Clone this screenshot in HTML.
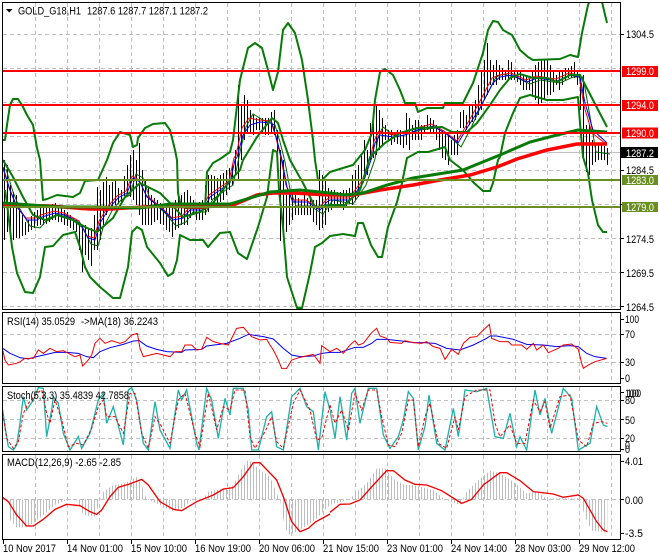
<!DOCTYPE html>
<html><head><meta charset="utf-8"><title>GOLD_G18,H1</title>
<style>
html,body{margin:0;padding:0;background:#fff;width:660px;height:560px;overflow:hidden}
svg{display:block}
text{font-family:"Liberation Sans",sans-serif;font-size:11px;fill:#000}
.n{fill:none}
</style></head><body>
<svg width="660" height="560" viewBox="0 0 660 560" xmlns="http://www.w3.org/2000/svg">
<defs>
<clipPath id="cm"><rect x="3" y="3" width="617" height="306"/></clipPath>
<clipPath id="cs"><rect x="0" y="231" width="1000" height="193"/></clipPath>
<pattern id="st" patternUnits="userSpaceOnUse" width="9" height="9"><rect x="3" y="0" width="3" height="9" fill="#bdbdbd"/></pattern>
</defs>
<rect width="660" height="560" fill="#fff"/>

<!-- grid -->
<g stroke="#c0c0c0" stroke-width="1" stroke-dasharray="4 3" fill="none" shape-rendering="crispEdges">
<path d="M35.5 3V309M67.5 3V309M99.5 3V309M131.5 3V309M163.5 3V309M195.5 3V309M227.5 3V309M259.5 3V309M291.5 3V309M323.5 3V309M355.5 3V309M387.5 3V309M419.5 3V309M451.5 3V309M483.5 3V309M515.5 3V309M547.5 3V309M579.5 3V309M611.5 3V309"/>
<path d="M3 34.5H620M3 68.5H620M3 102.5H620M3 136.5H620M3 170.5H620M3 204.5H620M3 238.5H620M3 272.5H620M3 306.5H620"/>
<path d="M35.5 313V383M67.5 313V383M99.5 313V383M131.5 313V383M163.5 313V383M195.5 313V383M227.5 313V383M259.5 313V383M291.5 313V383M323.5 313V383M355.5 313V383M387.5 313V383M419.5 313V383M451.5 313V383M483.5 313V383M515.5 313V383M547.5 313V383M579.5 313V383M611.5 313V383"/>
<path d="M3 334.5H620M3 362.5H620"/>
<path d="M35.5 387V451M67.5 387V451M99.5 387V451M131.5 387V451M163.5 387V451M195.5 387V451M227.5 387V451M259.5 387V451M291.5 387V451M323.5 387V451M355.5 387V451M387.5 387V451M419.5 387V451M451.5 387V451M483.5 387V451M515.5 387V451M547.5 387V451M579.5 387V451M611.5 387V451"/>
<path d="M3 400.5H620M3 419.5H620M3 438.5H620"/>
<path d="M35.5 455V539M67.5 455V539M99.5 455V539M131.5 455V539M163.5 455V539M195.5 455V539M227.5 455V539M259.5 455V539M291.5 455V539M323.5 455V539M355.5 455V539M387.5 455V539M419.5 455V539M451.5 455V539M483.5 455V539M515.5 455V539M547.5 455V539M579.5 455V539M611.5 455V539"/>
<path d="M3 499.5H620"/>
</g>
<path d="M3 152.5H620" stroke="#c0c0c0" stroke-width="1" shape-rendering="crispEdges"/>

<g clip-path="url(#cm)">
<!-- price bars -->
<path stroke="#000" stroke-width="1" fill="none" shape-rendering="crispEdges" d="M4.5 160V240M7.5 165V232M10.5 185V238M13.5 192V240M16.5 195V238M19.5 205V238M22.5 215V236M25.5 222V235M28.5 220V232M31.5 216V230M34.5 212V228M37.5 210V226M40.5 208V225M43.5 206V225M46.5 205V224M49.5 205V222M52.5 204V220M55.5 203V220M58.5 206V222M61.5 208V222M64.5 210V225M67.5 212V226M70.5 215V228M73.5 218V230M76.5 220V232M79.5 225V250M82.5 225V272M85.5 225V255M88.5 228V260M91.5 228V266M94.5 215V250M97.5 187V250M100.5 190V240M103.5 182V225M106.5 177V215M109.5 185V210M112.5 182V208M115.5 180V205M118.5 188V204M121.5 190V202M124.5 176V196M127.5 165V195M130.5 155V197M133.5 150V200M136.5 160V205M139.5 143V215M142.5 170V225M145.5 180V225M148.5 187V225M151.5 195V225M154.5 198V222M157.5 200V220M160.5 203V224M163.5 205V225M166.5 205V230M169.5 205V232M172.5 205V237M175.5 200V230M178.5 195V228M181.5 195V225M184.5 192V225M187.5 190V225M190.5 196V218M193.5 200V215M196.5 205V220M199.5 202V220M202.5 200V220M205.5 185V215M208.5 175V212M211.5 175V200M214.5 176V203M217.5 178V205M220.5 175V202M223.5 173V200M226.5 170V195M229.5 168V190M232.5 165V185M235.5 150V175M238.5 85V180M241.5 105V160M244.5 95V140M247.5 100V132M250.5 110V133M253.5 115V135M256.5 118V130M259.5 118V130M262.5 118V132M265.5 118V135M268.5 118V135M271.5 112V132M274.5 110V135M277.5 130V170M280.5 150V241M283.5 160V240M286.5 195V232M289.5 190V225M292.5 192V220M295.5 195V215M298.5 198V215M301.5 200V215M304.5 195V215M307.5 198V215M310.5 198V215M313.5 200V222M316.5 200V225M319.5 170V230M322.5 175V228M325.5 180V225M328.5 188V212M331.5 190V210M334.5 190V208M337.5 192V208M340.5 192V208M343.5 190V210M346.5 190V208M349.5 188V204M352.5 175V205M355.5 170V200M358.5 165V197M361.5 155V185M364.5 140V180M367.5 150V175M370.5 123V160M373.5 120V158M376.5 105V155M379.5 110V150M382.5 118V145M385.5 125V140M388.5 130V140M391.5 130V145M394.5 132V142M397.5 130V144M400.5 130V145M403.5 135V148M406.5 113V145M409.5 118V150M412.5 125V140M415.5 120V140M418.5 120V140M421.5 125V140M424.5 125V132M427.5 115V130M430.5 118V132M433.5 120V134M436.5 125V140M439.5 128V150M442.5 130V158M445.5 132V160M448.5 135V165M451.5 140V155M454.5 135V155M457.5 130V155M460.5 112V128M463.5 110V128M466.5 115V130M469.5 105V125M472.5 105V122M475.5 100V120M478.5 85V115M481.5 70V110M484.5 60V100M487.5 43V95M490.5 60V85M493.5 65V85M496.5 60V85M499.5 65V80M502.5 68V80M505.5 70V80M508.5 60V80M511.5 62V80M514.5 70V80M517.5 70V82M520.5 72V85M523.5 75V90M526.5 75V90M529.5 78V90M532.5 70V95M535.5 65V100M538.5 62V105M541.5 60V103M544.5 60V100M547.5 60V95M550.5 65V95M553.5 70V92M556.5 75V85M559.5 72V90M562.5 70V85M565.5 68V80M568.5 68V78M571.5 66V78M574.5 62V78M577.5 70V85M580.5 75V110M583.5 75V160M586.5 125V172M589.5 125V175M592.5 140V165M595.5 143V162M598.5 145V160M601.5 145V160M604.5 146V160M607.5 148V165"/>
<!-- thin MAs -->
<polyline class="n" stroke="#006400" stroke-width="1" transform="translate(3,2)" points="3,167 10,190 17,207 27,224 37,226 42,220 55,213 65,215 80,226 88,242 95,244 100,226 110,207 118,198 127,193 133,172 140,176 147,197 163,212 173,224 183,220 190,210 203,210 210,197 230,183 235,160 237,150 243,125 250,112 260,118 272,123 277,140 282,160 287,187 293,204 307,204 320,212 330,198 350,202 363,183 372,157 375,135 380,125 393,135 405,132 417,128 433,126 445,133 458,145 467,128 480,100 493,75 500,72 512,75 527,82 537,78 557,81 570,75 580,75 585,103 593,150 607,152"/>
<polyline class="n" stroke="#f00000" stroke-width="1" transform="translate(-1,-2)" points="3,167 10,190 17,207 27,220 37,220 42,217 55,213 65,215 80,223 88,238 95,240 100,223 110,207 118,198 127,193 133,178 140,182 147,197 163,210 173,220 183,218 190,210 203,210 210,197 230,183 235,160 237,157 243,130 250,120 260,122 272,123 277,140 282,160 287,187 293,202 307,202 320,210 327,202 330,200 350,200 363,183 372,157 375,143 380,133 393,137 405,135 417,130 433,126 445,133 458,143 467,128 480,105 493,80 500,77 512,75 527,82 537,78 557,81 570,75 580,77 585,108 593,135 607,146"/>
<polyline class="n" stroke="#0000f0" stroke-width="1" points="3,167 10,190 17,207 27,220 37,220 42,217 55,213 65,215 80,223 88,238 95,240 100,223 110,207 118,198 127,193 133,178 140,182 147,197 163,210 173,220 183,218 190,210 203,210 210,197 230,183 235,160 237,157 243,135 250,125 260,122 272,123 277,140 282,160 287,187 293,202 307,202 320,210 327,202 330,200 350,200 363,183 372,157 375,143 380,135 393,137 405,135 417,130 433,126 445,133 458,143 467,128 480,108 493,83 500,77 512,75 527,82 537,78 557,81 570,75 580,77 585,103 593,130 607,143"/>

<!-- Bollinger bands -->
<g stroke="#087a08" stroke-width="2" fill="none" stroke-linejoin="round">
<polyline points="3,140 5,140 7,125 10,105 13,99 18,99 22,105 27,115 33,125 37,148 40,160 43,200 47,199 57,195 73,197 80,193 85,181 98,180 107,160 113,143 120,132 130,135 133,147 137,145 138,138 145,128 153,124 165,123 170,130 175,150 177,160 178,193 180,202 185,208 205,208 207,172 213,163 220,159 230,152 233,140 240,80 248,48 255,43 262,48 268,70 273,90 278,72 283,30 288,23 295,33 302,60 308,100 313,140 315,160 318,180 322,180 330,172 343,168 353,165 357,160 365,150 372,133 375,100 380,72 385,69 393,75 400,90 405,103 415,103 418,112 427,108 443,108 445,103 463,103 473,83 483,53 488,30 493,21 498,22 503,30 512,35 520,50 528,57 533,60 560,59 570,55 578,57 582,33 588,5 590,0 600,0 602,2 607,23"/>
<polyline points="3,160 13,177 23,197 33,215 45,220 57,215 73,220 87,228 97,232 113,218 125,197 140,183 160,193 170,203 183,217 200,212 213,203 228,183 240,170 243,160 257,137 272,118 278,123 283,140 290,160 303,183 315,207 330,205 345,205 360,190 370,157 385,143 400,133 417,128 442,127 452,132 467,132 477,123 490,105 500,90 510,78 520,74 533,78 547,78 557,82 570,75 580,75 593,100 607,127"/>
<polyline points="5,190 7,203 12,247 17,273 25,292 33,293 40,277 45,247 53,246 63,235 75,232 80,247 85,267 90,277 100,287 113,298 120,298 128,267 132,232 137,227 142,230 147,247 160,263 168,276 173,273 177,260 180,235 190,240 203,240 208,247 220,233 230,232 238,253 247,259 258,227 267,197 273,150 277,152 279,190 283,227 287,277 297,308 302,308 310,273 315,247 322,243 330,236 343,234 355,236 358,223 363,223 371,245 378,257 382,257 388,227 397,202 402,183 407,158 418,152 428,152 445,147 450,160 463,170 473,182 483,191 490,191 493,183 498,160 500,157 505,133 513,113 520,98 530,95 547,100 563,100 578,97 580,123 583,157 588,173 592,200 598,225 603,232 607,232"/>
</g>
<!-- thick MAs -->
<polyline class="n" stroke="#ff0000" stroke-width="3.5" points="3,205 50,206 90,209 110,209 160,206 200,207 233,205 257,195 273,193 293,193 330,195 353,195 380,190 413,185 440,180 470,175 497,167 517,159 547,150 577,144 607,144"/>
<polyline class="n" stroke="#087a08" stroke-width="3" points="3,203 60,207 100,207 140,208 170,204 230,204 250,198 270,192 300,190 330,193 345,195 363,193 387,185 413,178 463,170 500,155 530,142 557,135 578,130 607,132"/>
<!-- level lines -->
<g stroke-width="2" shape-rendering="crispEdges">
<path d="M3 71H622M3 105H622M3 133H622" stroke="#ff0000"/>
<path d="M3 180H622M3 207H622" stroke="#6b8e23"/>
</g>
</g>

<!-- RSI -->
<g transform="translate(0,310) scale(.33333)" fill="none" stroke-width="3">
<polyline stroke="#0000f0" points="8,115 30,130 60,143 85,147 110,140 140,133 165,127 200,127 235,130 260,140 280,143 300,125 330,113 370,103 400,93 418,92 440,108 470,118 500,125 545,127 555,120 605,118 620,108 680,100 720,85 745,73 790,80 820,87 850,115 875,135 900,140 940,138 965,130 990,127"/>
<polyline stroke="#f00000" points="8,120 15,150 25,165 50,160 60,155 75,145 100,145 115,120 130,130 150,115 170,125 190,122 205,130 225,140 240,135 248,168 265,150 275,135 285,100 300,85 315,100 335,92 360,100 375,95 395,75 412,70 420,115 430,140 470,130 490,135 510,140 525,125 545,125 555,105 575,105 590,120 605,118 620,82 640,95 660,100 685,105 710,55 730,52 755,80 780,90 800,88 810,105 820,120 835,150 845,175 860,175 875,150 900,142 940,133 960,160 965,107 990,125"/>
</g>
<g transform="translate(330,310) scale(.33333)" fill="none" stroke-width="3">
<polyline stroke="#0000f0" points="0,127 30,127 75,112 100,112 125,100 140,88 170,88 215,93 250,98 280,98 315,100 350,115 390,120 430,105 470,85 480,78 500,78 550,88 590,103 640,105 680,110 720,107 745,110 770,130 795,140 830,145"/>
<polyline stroke="#f00000" points="0,125 20,115 40,130 60,105 75,92 85,105 100,100 125,68 140,55 150,78 170,85 180,97 215,100 225,92 250,98 275,100 290,95 310,110 330,115 345,148 365,118 385,133 400,100 420,82 440,80 460,60 478,43 485,85 510,95 535,95 545,105 575,105 590,118 610,100 620,120 640,105 655,128 685,115 700,105 725,102 745,118 755,160 760,175 775,165 795,155 830,145"/>
</g>

<!-- Stochastic -->
<g transform="translate(0,310) scale(.33333)" fill="none" stroke-width="3" clip-path="url(#cs)">
<polyline stroke="#20b2aa" stroke-width="4" points="8,300 15,350 25,410 40,420 50,405 60,340 70,260 80,300 100,270 115,233 130,235 140,380 155,300 160,260 175,280 190,370 210,420 235,380 245,415 270,370 295,270 310,250 320,340 340,290 370,405 385,240 395,233 410,270 430,400 445,420 465,275 480,360 510,415 535,240 545,270 560,240 590,400 597,420 620,235 635,270 655,385 675,265 690,315 700,235 730,235 745,300 755,420 775,420 800,320 815,305 830,410 850,420 875,260 900,235 920,290 940,305 955,420 975,245 990,300"/>
<polyline stroke="#f00000" stroke-dasharray="9 6" points="8,310 20,385 40,415 55,395 70,310 85,280 110,250 125,240 140,310 150,340 165,270 185,330 205,410 230,400 250,405 275,355 295,290 310,270 320,320 345,320 370,370 390,250 405,250 425,370 445,415 465,320 485,350 510,400 535,270 555,250 585,370 600,410 625,250 650,360 670,290 690,300 705,240 735,240 750,380 765,415 795,365 815,320 830,395 850,415 880,280 900,240 930,300 950,390 965,385 990,285"/>
</g>
<g transform="translate(330,310) scale(.33333)" fill="none" stroke-width="3" clip-path="url(#cs)">
<polyline stroke="#20b2aa" stroke-width="4" points="0,300 15,385 30,260 50,390 65,250 75,235 90,340 115,235 140,235 160,375 180,415 205,380 220,330 235,245 250,265 265,420 285,350 297,255 320,400 345,420 370,295 385,380 405,240 440,245 470,235 495,380 520,385 540,310 560,410 570,380 590,420 615,240 630,315 645,265 665,370 700,235 725,265 745,420 780,400 800,290 820,345 832,350"/>
<polyline stroke="#f00000" stroke-dasharray="9 6" points="0,285 15,340 35,300 55,360 75,250 95,300 115,240 140,240 155,320 175,405 195,410 215,370 235,270 250,270 265,410 285,320 300,280 325,400 350,415 375,320 385,360 405,260 440,240 480,240 495,340 510,380 540,345 560,400 585,400 610,270 630,305 645,275 660,355 690,260 720,255 745,390 770,410 790,340 815,335 832,340"/>
</g>

<!-- MACD -->
<g transform="translate(0,440) scale(.33333)" fill="none" stroke-width="3">
<polygon fill="url(#st)" stroke="none" points="8,178 22,180 30,240 50,262 75,262 100,250 130,225 165,195 200,180 230,180 250,225 285,230 300,180 310,155 340,135 375,130 415,108 430,150 440,178 470,190 520,215 555,200 575,178 610,175 625,155 680,145 700,135 720,95 745,58 780,90 810,110 835,170 840,178 855,265 870,285 900,270 945,240 990,195 990,178"/>
<polyline stroke="#f00000" stroke-width="4" points="8,172 25,185 50,225 80,258 100,258 130,238 165,208 200,193 240,197 270,215 290,223 305,210 330,170 355,142 385,133 425,118 445,135 480,185 520,208 545,212 590,185 640,165 670,147 700,143 730,110 760,68 780,68 830,120 850,170 875,245 900,275 925,265 945,247 990,222"/>
</g>
<g transform="translate(330,440) scale(.33333)" fill="none" stroke-width="3">
<polygon fill="url(#st)" stroke="none" points="0,178 0,195 60,178 75,160 110,130 140,85 165,85 195,120 225,135 250,135 310,150 345,178 390,195 410,155 440,125 480,92 510,100 550,125 590,160 620,155 650,175 700,175 750,175 765,230 785,272 832,278 832,178"/>
<polyline stroke="#f00000" stroke-width="4" points="0,217 30,193 60,192 90,180 130,135 170,92 190,92 225,120 255,133 290,135 335,152 395,190 425,178 460,135 510,98 530,98 570,122 610,155 670,162 700,172 745,165 760,175 800,245 820,270 832,275"/>
</g>

<!-- panel frames -->
<g fill="none" stroke="#000" stroke-width="1" shape-rendering="crispEdges">
<rect x="2.5" y="2.5" width="618" height="307"/>
<rect x="2.5" y="312.5" width="618" height="71"/>
<rect x="2.5" y="386.5" width="618" height="65"/>
<rect x="2.5" y="454.5" width="618" height="85"/>
</g>

<!-- ticks -->
<g stroke="#000" stroke-width="1" shape-rendering="crispEdges" fill="none">
<path d="M621 34.5H624M621 170.5H624M621 204.5H624M621 238.5H624M621 272.5H624M621 306.5H624M621 319.5H624M621 334.5H624M621 362.5H624M621 378.5H624M621 392.5H624M621 400.5H624M621 419.5H624M621 438.5H624M621 449.5H624M621 461.5H624M621 499.5H624M621 533.5H624"/>
<path d="M3.5 540V544M67.5 540V544M131.5 540V544M195.5 540V544M259.5 540V544M323.5 540V544M387.5 540V544M451.5 540V544M515.5 540V544M579.5 540V544"/>
</g>

<!-- price labels -->
<rect x="622" y="66" width="36" height="11" fill="#ff0000"/>
<rect x="622" y="100" width="36" height="11" fill="#ff0000"/>
<rect x="622" y="127.5" width="36" height="11" fill="#ff0000"/>
<rect x="621" y="147" width="37" height="11" fill="#000"/>
<rect x="622" y="175" width="36" height="10" fill="#6b8e23"/>
<rect x="622" y="202" width="36" height="10" fill="#6b8e23"/>
<text x="626" y="38" textLength="28" lengthAdjust="spacingAndGlyphs">1304.5</text>
<text x="626" y="174" textLength="28" lengthAdjust="spacingAndGlyphs">1284.5</text>
<text x="626" y="243" textLength="28" lengthAdjust="spacingAndGlyphs">1274.5</text>
<text x="626" y="277" textLength="28" lengthAdjust="spacingAndGlyphs">1269.5</text>
<text x="626" y="311" textLength="28" lengthAdjust="spacingAndGlyphs">1264.5</text>
<text style="fill:#fff" x="626" y="75" textLength="28" lengthAdjust="spacingAndGlyphs">1299.0</text>
<text style="fill:#fff" x="626" y="109" textLength="28" lengthAdjust="spacingAndGlyphs">1294.0</text>
<text style="fill:#fff" x="626" y="137" textLength="28" lengthAdjust="spacingAndGlyphs">1290.0</text>
<text style="fill:#fff" x="626" y="157" textLength="28" lengthAdjust="spacingAndGlyphs">1287.2</text>
<text style="fill:#fff" x="626" y="184" textLength="28" lengthAdjust="spacingAndGlyphs">1283.0</text>
<text style="fill:#fff" x="626" y="211" textLength="28" lengthAdjust="spacingAndGlyphs">1279.0</text>

<!-- sub-window axis -->
<text x="625" y="323" textLength="14" lengthAdjust="spacingAndGlyphs">100</text>
<text x="625" y="338" textLength="10" lengthAdjust="spacingAndGlyphs">70</text>
<text x="625" y="366" textLength="10" lengthAdjust="spacingAndGlyphs">30</text>
<text x="625" y="382" textLength="5" lengthAdjust="spacingAndGlyphs">0</text>
<text x="625" y="397" textLength="14" lengthAdjust="spacingAndGlyphs">100</text>
<text x="627" y="397" textLength="14" lengthAdjust="spacingAndGlyphs">100</text>
<text x="625" y="404" textLength="10" lengthAdjust="spacingAndGlyphs">80</text>
<text x="625" y="424" textLength="10" lengthAdjust="spacingAndGlyphs">50</text>
<text x="625" y="442" textLength="10" lengthAdjust="spacingAndGlyphs">20</text>
<text x="625" y="449" textLength="5" lengthAdjust="spacingAndGlyphs">0</text>
<text x="625" y="453" textLength="5" lengthAdjust="spacingAndGlyphs">0</text>
<text x="625" y="465" textLength="18" lengthAdjust="spacingAndGlyphs">4.01</text>
<text x="625" y="504" textLength="18" lengthAdjust="spacingAndGlyphs">0.00</text>
<text x="625" y="537" textLength="18" lengthAdjust="spacingAndGlyphs">-3.5</text>

<!-- titles -->
<polygon points="6,9 12.5,9 9.2,12.5" fill="#000"/>
<text x="18" y="14.5" textLength="63" lengthAdjust="spacingAndGlyphs">GOLD_G18,H1</text>
<text x="87" y="14.5" textLength="121" lengthAdjust="spacingAndGlyphs">1287.6 1287.7 1287.1 1287.2</text>
<text x="7" y="325" textLength="68" lengthAdjust="spacingAndGlyphs">RSI(14) 35.0529</text>
<text x="81" y="325" textLength="77" lengthAdjust="spacingAndGlyphs">-&gt;MA(18) 36.2243</text>
<text x="7" y="399" textLength="122" lengthAdjust="spacingAndGlyphs">Stoch(5,3,3) 35.4839 42.7858</text>
<text x="7" y="466" textLength="114" lengthAdjust="spacingAndGlyphs">MACD(12,26,9) -2.65 -2.85</text>

<!-- dates -->
<text x="3" y="552" textLength="53" lengthAdjust="spacingAndGlyphs">10 Nov 2017</text>
<text x="67" y="552" textLength="56" lengthAdjust="spacingAndGlyphs">14 Nov 01:00</text>
<text x="131" y="552" textLength="56" lengthAdjust="spacingAndGlyphs">15 Nov 10:00</text>
<text x="195" y="552" textLength="56" lengthAdjust="spacingAndGlyphs">16 Nov 19:00</text>
<text x="259" y="552" textLength="56" lengthAdjust="spacingAndGlyphs">20 Nov 06:00</text>
<text x="323" y="552" textLength="56" lengthAdjust="spacingAndGlyphs">21 Nov 15:00</text>
<text x="387" y="552" textLength="56" lengthAdjust="spacingAndGlyphs">23 Nov 01:00</text>
<text x="451" y="552" textLength="56" lengthAdjust="spacingAndGlyphs">24 Nov 14:00</text>
<text x="515" y="552" textLength="56" lengthAdjust="spacingAndGlyphs">28 Nov 03:00</text>
<text x="579" y="552" textLength="56" lengthAdjust="spacingAndGlyphs">29 Nov 12:00</text>
</svg>
</body></html>
